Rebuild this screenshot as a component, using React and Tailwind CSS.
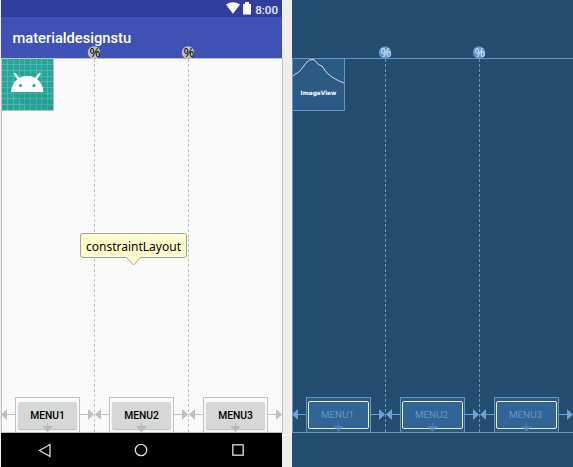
const MENUS = ["MENU1", "MENU2", "MENU3"];
const GUIDES = [93, 187];

function Arrows({ color, down, downOpacity }) {
  return (
    <svg className="pointer-events-none absolute -left-px -top-px" width="282" height="375" viewBox="0 0 282 375">
      {[14, 108, 202].map((x) => (
        <g key={x} fill={color}>
          <rect x={x - 8} y="356" width="8" height="1" />
          <path d={`M${x - 14} 356.500l6-5.500v11z`} />
          <rect x={x + 65} y="356" width="8" height="1" />
          <path d={`M${x + 79} 356.500l-6-5.500v11z`} />
          <g fill={down} opacity={downOpacity}>
            <rect x={x + 32} y="365" width="1" height="3" />
            <path d={`M${x + 32.5} 374l-5.500-6h11z`} />
          </g>
        </g>
      ))}
    </svg>
  );
}

function Guides({ color, text, line }) {
  return (
    <svg className="pointer-events-none absolute -left-px -top-[13px] overflow-visible" width="282" height="388" viewBox="0 0 282 388">
      {GUIDES.map((x) => (
        <g key={x}>
          <path d={`M${x + 0.5} 13V387`} stroke={line} strokeDasharray="3 2" shapeRendering="crispEdges" />
          <circle cx={x} cy="6.500" r="6.200" fill={color} />
          <text x={x + 0.8} y="10.500" textAnchor="middle" fontSize="13" fill={text} fontFamily="'Noto Sans', sans-serif">
            %
          </text>
        </g>
      ))}
    </svg>
  );
}

function LauncherIcon() {
  return (
    <svg width="51" height="51" viewBox="0 0 51 51">
      <rect width="51" height="51" fill="#26a69a" />
      <path d="M5.500 0V51M11.500 0V51M17.500 0V51M22.500 0V51M28.500 0V51M34.500 0V51M39.500 0V51M45.500 0V51M0 5.500H51M0 11.500H51M0 17.500H51M0 22.500H51M0 28.500H51M0 34.500H51M0 39.500H51M0 45.500H51" stroke="#69c1b8" strokeWidth=".6" />
      <path d="M10 33L27 51H51V43L41 32z" fill="#1f8f84" opacity=".25" />
      <path d="M9 33C9.500 25 15 17 25.300 17S41 25 41.500 33z" fill="#fff" />
      <path d="M13 15l4.500 6M37.500 15l-4.500 6" stroke="#fff" strokeWidth="2.200" strokeLinecap="round" />
      <circle cx="18.500" cy="26.500" r="1.600" fill="#26a69a" />
      <circle cx="32" cy="26.500" r="1.600" fill="#26a69a" />
    </svg>
  );
}

function DesignView() {
  return (
    <div className="flex w-[282px] shrink-0 flex-col">
      <div className="flex h-[17px] w-[281px] items-center justify-end bg-[#303f9f] pr-[4px]">
        <svg width="26" height="17" viewBox="0 0 26 17" fill="#fff">
          <path d="M0 4.500Q7 .1 14 4.500L7 13.800z" />
          <path d="M17 4h2V2h4v2h2v10.500h-8z" />
        </svg>
        <span className="ml-[3px] mt-[3px] font-['Roboto',sans-serif] text-[11.6px] font-medium leading-[16px] text-white/90">8:00</span>
      </div>
      <div className="flex h-[41px] w-[281px] items-center bg-[#3f51b5] pl-[11.5px] pt-[2px]">
        <span className="font-['Roboto',sans-serif] text-[14.7px] font-medium leading-none text-white">materialdesignstu</span>
      </div>
      <div className="relative flex h-[375px] flex-col justify-between border border-[#c0c0c0] bg-[#fafafa]">
        <div className="h-[52px] w-[52px] border-b border-r border-[#c0c0c0]">
          <LauncherIcon />
        </div>
        <div className="flex gap-[29px] pl-[13px]">
          {MENUS.map((m) => (
            <div key={m} className="h-[35px] w-[65px] border-x border-t border-[#c0c0c0] px-[2px] pt-[4px]">
              <div className="flex h-[27px] items-center justify-center rounded-[2px] bg-[#d6d7d7] pt-px font-['Roboto',sans-serif] text-[10.3px] font-medium leading-none text-black shadow-[0_1px_1px_#bbb]">
                {m}
              </div>
            </div>
          ))}
        </div>
        <Guides color="#c0c0c0" text="#000" line="#c0c0c0" />
        <Arrows color="#c0c0c0" down="#b8b8b8" downOpacity="1" />
        <div className="absolute left-[78px] top-[174px] h-[25px] w-[107px] rounded-[3px] border border-[#a0a0a0] bg-[#ffffcc] text-center font-['Noto_Sans',sans-serif] text-[12px] leading-[25px] text-black">
          <span className="whitespace-nowrap">constraintLayout</span>
          <svg className="absolute left-[45px] top-[22px]" width="16" height="10" viewBox="0 0 16 10">
            <path d="M0 0V1L7.500 9L15 1V0" fill="#ffffcc" />
            <path d="M.5 1.500L7.500 9L14.500 1.500" fill="none" stroke="#a0a0a0" />
          </svg>
        </div>
      </div>
      <div className="grid h-[34px] w-[281px] grid-cols-[87px_106px_87px] place-items-center bg-black">
        <svg width="14" height="15" viewBox="0 0 14 15"><path d="M1.500 7.500L12 1.500v12z" fill="none" stroke="#e0e0e0" strokeWidth="1.300" /></svg>
        <svg width="14" height="14" viewBox="0 0 14 14"><circle cx="7" cy="7" r="5.700" fill="none" stroke="#e0e0e0" strokeWidth="1.300" /></svg>
        <svg width="12" height="12" viewBox="0 0 12 12"><rect x=".8" y=".8" width="10.400" height="10.400" fill="none" stroke="#e0e0e0" strokeWidth="1.300" /></svg>
      </div>
    </div>
  );
}

function BlueprintView() {
  return (
    <div className="w-[282px] shrink-0 bg-[#234d6e] pt-[58px]">
      <div className="relative flex h-[375px] flex-col justify-between border border-[#6098cb]">
        <div className="flex h-[52px] w-[52px] flex-col items-center border-b border-r border-[#6098cb] bg-[#2b5b84]">
          <svg width="51" height="26" viewBox="0 0 51 26">
            <path d="M0 17L3 14.500L5 13.800L8 10.500L14 3L16.500 1L20 .5L22 1.500L26 6L29 7L34 14L39 18L45 21.500L51 24" fill="none" stroke="#d3dce6" strokeWidth="1" />
          </svg>
          <span className="mt-[4px] font-['DejaVu_Sans',sans-serif] text-[5.8px] font-bold leading-[8px] text-white">ImageView</span>
        </div>
        <div className="flex gap-[29px] pl-[13px]">
          {MENUS.map((m) => (
            <div key={m} className="h-[35px] w-[65px] shrink-0 border-x border-t border-[#6098cb] bg-[#2b5b84] px-px pt-[3px]">
              <div className="flex h-[28px] items-center justify-center rounded-[2px] border border-[#e6edf5] bg-[#306595] pr-[2px] font-['Roboto',sans-serif] text-[9.9px] leading-none text-[#6098cb]">
                {m}
              </div>
            </div>
          ))}
        </div>
        <Guides color="#6098cb" text="#dbe6f2" line="#6098cb" />
        <Arrows color="#6aa3d9" down="#5489b9" downOpacity=".65" />
      </div>
    </div>
  );
}

export default function App() {
  return (
    <div className="flex h-[467px] w-[573px] overflow-hidden bg-[#eeeeee] pl-px">
      <DesignView />
      <div className="w-[9px] shrink-0" />
      <BlueprintView />
    </div>
  );
}
